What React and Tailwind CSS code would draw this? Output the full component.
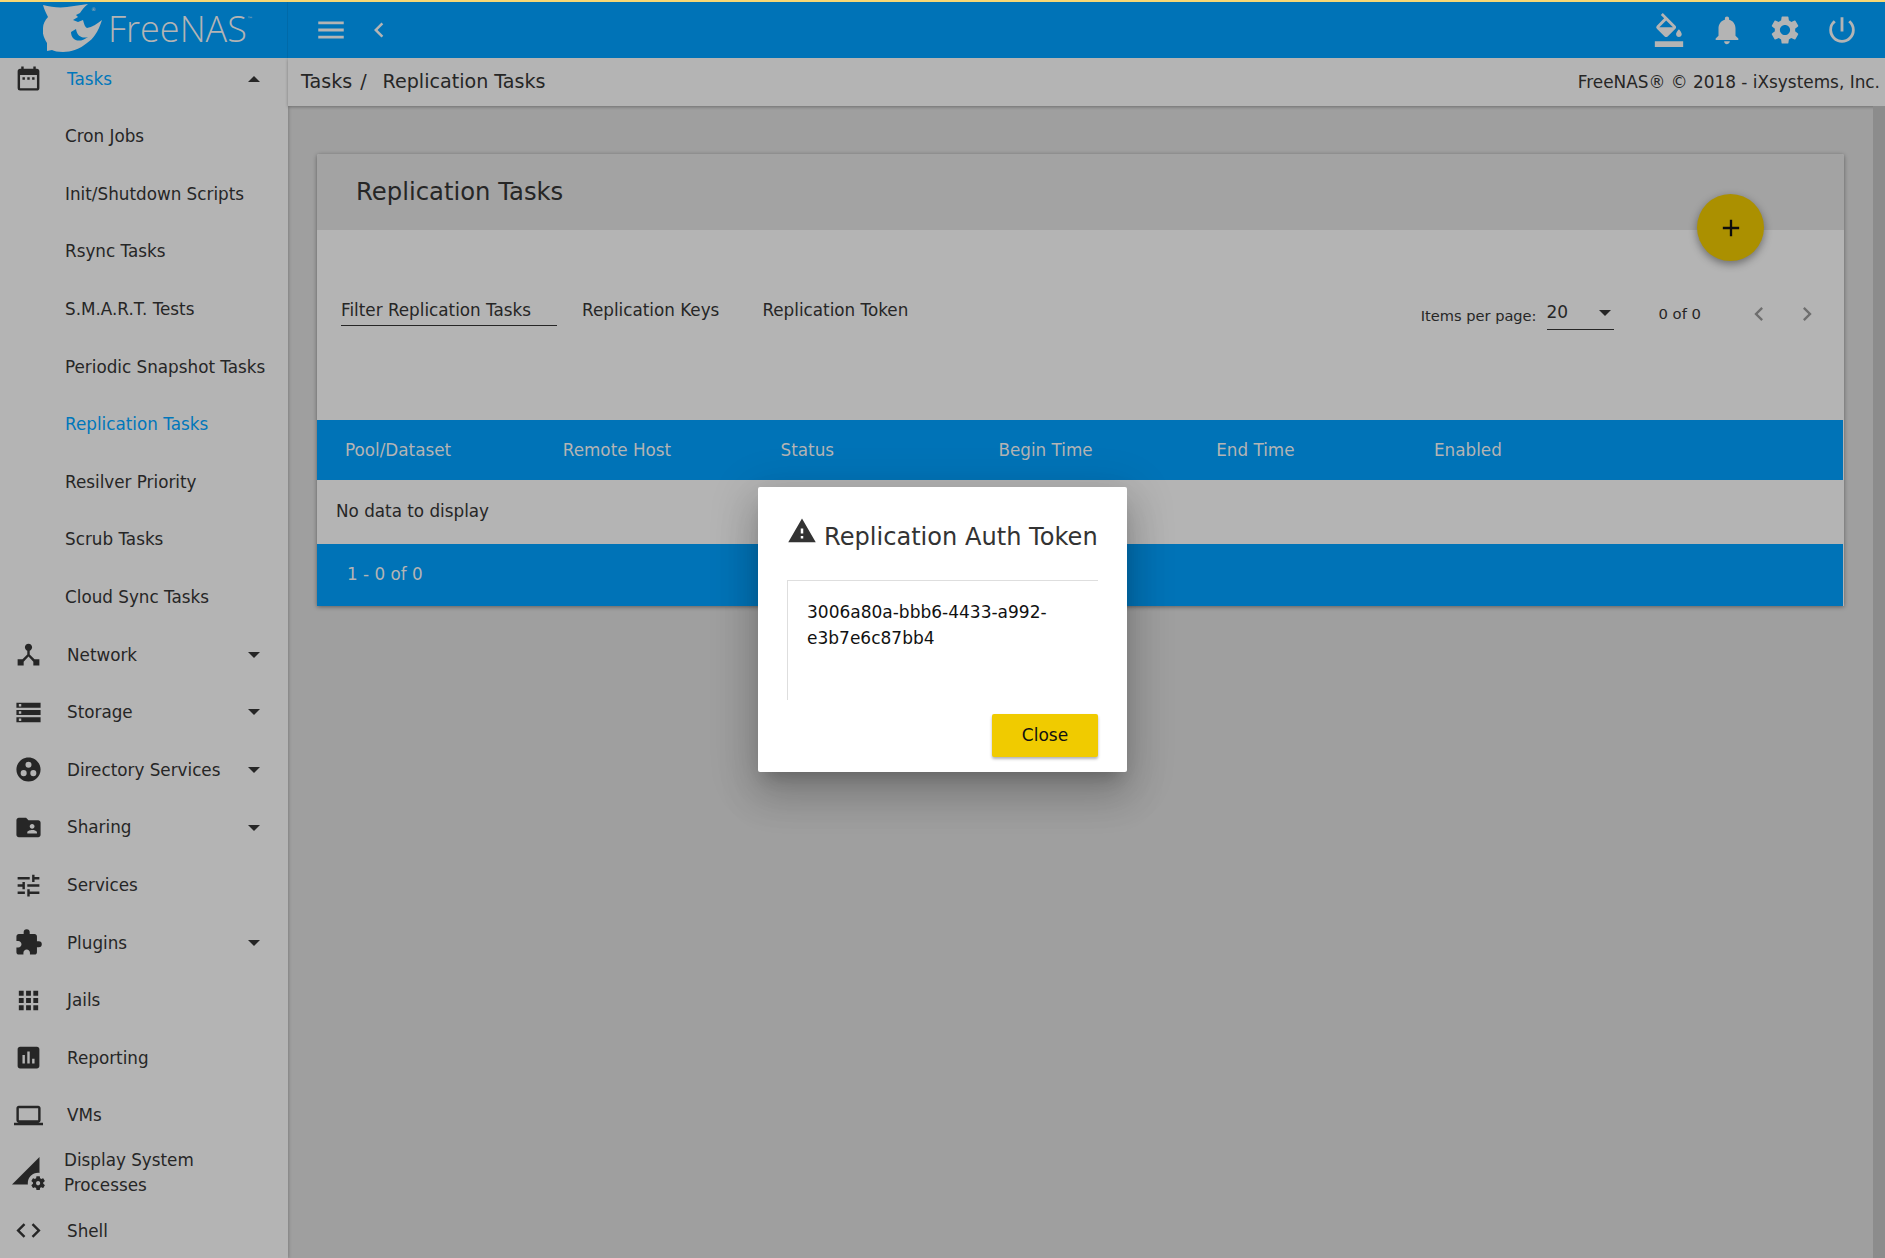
import {
  MdApps, MdAssessment, MdChevronLeft, MdChevronRight, MdCode, MdDateRange, MdDeviceHub, MdExtension,
  MdFolderShared, MdFormatColorFill, MdGroupWork, MdLaptop, MdMenu, MdNotifications, MdPermDataSetting,
  MdPowerSettingsNew, MdSettings, MdStorage, MdTune, MdWarning, MdAdd,
} from 'react-icons/md';

const fontStack = 'font-["DejaVu_Sans",sans-serif]';

const taskLinks = [
  'Cron Jobs',
  'Init/Shutdown Scripts',
  'Rsync Tasks',
  'S.M.A.R.T. Tests',
  'Periodic Snapshot Tasks',
  'Replication Tasks',
  'Resilver Priority',
  'Scrub Tasks',
  'Cloud Sync Tasks',
];

const navLinks = [
  { label: 'Network', icon: MdDeviceHub, caret: true },
  { label: 'Storage', icon: MdStorage, caret: true },
  { label: 'Directory Services', icon: MdGroupWork, caret: true },
  { label: 'Sharing', icon: MdFolderShared, caret: true },
  { label: 'Services', icon: MdTune },
  { label: 'Plugins', icon: MdExtension, caret: true },
  { label: 'Jails', icon: MdApps },
  { label: 'Reporting', icon: MdAssessment },
  { label: 'VMs', icon: MdLaptop },
];

const columns = ['Pool/Dataset', 'Remote Host', 'Status', 'Begin Time', 'End Time', 'Enabled'];

function Caret({ up = false, className = '' }) {
  return (
    <svg width="12" height="6" viewBox="0 0 12 6" className={`fill-[#262626] ${className}`}>
      <path d={up ? 'M0 6L6 0l6 6z' : 'M0 0l6 6 6-6z'} />
    </svg>
  );
}

function Logo() {
  return (
    <div className="flex items-center pl-[43px] text-[#b4b4b4]">
      <svg width="62" height="52" viewBox="0 0 62 52" className="-mt-[3px] shrink-0 fill-[#b4b4b4]">
        <path d="M0 2 C8 4 16 5 24 4 C31 3 38 2 45 1 C41 4 39 7 37 10 L33 12 L35 14 L30 17 L35 19 L40 17 C41 21 42 24 44 25 C49 24 54 21 59 17 C57 23 55 28 52 32 C50 35 47 38 44 40 C37 46 28 49 20 49 C15 49 11 48 9 47 L4 48 L4 40 C1 35 -1 30 0 25 C0 21 2 17 5 14 C3 10 1 6 0 2 Z" />
        <path d="M28 29 C28 37 36 41 45 34 C39 36 34 33 33 26 Z" className="fill-[#0073b7]" />
        <text x="48" y="8" fontSize="5" className="fill-[#b4b4b4]">®</text>
      </svg>
      <span className='-mt-[3px] ml-[3px] font-["Open_Sans",sans-serif] text-[36px] leading-none font-light'>FreeNAS</span>
      <span className="mb-[24px] text-[6px]">™</span>
    </div>
  );
}

function NavRow({ label, icon: Icon, caret, active }) {
  return (
    <div className="flex h-[57.6px] shrink-0 items-center pr-[28px]">
      <div className="flex w-[67px] shrink-0 justify-center pr-[11px]">
        <Icon size={29} className="text-[#262626]" />
      </div>
      <span className={`flex-1 pt-[1px] text-[16.8px] ${active ? 'text-[#0077bb]' : 'text-[#262626]'}`}>{label}</span>
      {caret && <Caret up={active} />}
    </div>
  );
}

function Sidebar() {
  return (
    <aside className="w-[288px] shrink-0 overflow-hidden bg-[#b4b4b4] shadow-[1px_0_3px_rgba(0,0,0,0.2)]">
      <div className="-mt-[8px] flex flex-col">
        <NavRow label="Tasks" icon={MdDateRange} caret active />
        {taskLinks.map((link) => (
          <div
            key={link}
            className={`flex h-[57.6px] shrink-0 items-center pl-[65px] pt-[1px] text-[16.8px] ${link === 'Replication Tasks' ? 'text-[#0077bb]' : 'text-[#262626]'}`}
          >
            {link}
          </div>
        ))}
        {navLinks.map((link) => (
          <NavRow key={link.label} {...link} />
        ))}
        <div className="flex h-[57.6px] shrink-0 items-center">
          <div className="flex w-[64px] shrink-0 justify-center pr-[8px]">
            <MdPermDataSetting size={33} className="text-[#262626]" />
          </div>
          <span className="text-[16.8px] leading-[25px] text-[#262626]">
            Display System
            <br />
            Processes
          </span>
        </div>
        <NavRow label="Shell" icon={MdCode} />
      </div>
    </aside>
  );
}

function TopBar() {
  return (
    <header className="z-20 flex h-[58px] shrink-0 items-center border-t-2 border-[#f7d774] bg-[#0073b7] text-[#b4b4b4]">
      <div className="flex h-full w-[288px] shrink-0 items-center border-r border-[#006aa9]">
        <Logo />
      </div>
      <MdMenu size={34} className="ml-[26px]" />
      <MdChevronLeft size={30} className="ml-[16px]" />
      <div className="ml-auto flex items-center gap-[24px] pr-[26px]">
        <MdFormatColorFill size={34} />
        <MdNotifications size={34} />
        <MdSettings size={34} />
        <MdPowerSettingsNew size={34} className="-ml-[1px]" />
      </div>
    </header>
  );
}

function Toolbar() {
  return (
    <div className="flex h-[190px] pl-[24px] pr-[23px]">
      <div className="mt-[58px] flex h-[38px] items-start text-[16.8px] text-[#262626]">
        <div className="h-[38px] w-[216px] border-b border-[#262626] pt-[10px] leading-[24px]">Filter Replication Tasks</div>
        <div className="ml-[25px] pt-[10px] leading-[24px]">Replication Keys</div>
        <div className="ml-[43px] pt-[10px] leading-[24px]">Replication Token</div>
      </div>
      <div className="ml-auto mt-[64px] flex h-[36px] items-start text-[#262626]">
        <span className="mt-[12px] text-[14.6px] leading-[20px]">Items per page:</span>
        <div className="ml-[10px] flex h-[36px] w-[67px] items-center justify-between border-b border-[#262626] pr-[3px] pt-[2px] text-[17px]">
          20
          <Caret />
        </div>
        <span className="ml-[45px] mt-[10px] text-[14.8px] leading-[20px]">0 of 0</span>
        <MdChevronLeft size={28} className="ml-[44px] mt-[6px] text-[#6e6e6e]" />
        <MdChevronRight size={28} className="ml-[20px] mt-[6px] text-[#6e6e6e]" />
      </div>
    </div>
  );
}

function ReplicationCard() {
  return (
    <section className="relative w-[1527px] rounded-t-[2px] bg-[#b4b4b4] shadow-[0_1px_4px_rgba(0,0,0,0.4)]">
      <div className="flex h-[76px] items-center rounded-t-[2px] bg-[#a3a3a3] pl-[39px] pt-[1px] text-[24.3px] text-[#262626]">
        Replication Tasks
      </div>
      <button className="absolute right-[80px] top-[40px] flex h-[67px] w-[67px] items-center justify-center rounded-full bg-[#ab9000] text-[#0d0d0d] shadow-[0_3px_8px_rgba(0,0,0,0.4)]">
        <MdAdd size={28} />
      </button>
      <Toolbar />
      <div className="mr-[1px] flex h-[60px] items-center bg-[#0073b7] pl-[28px] pt-[1px] text-[16.8px] text-[#b4b4b4]">
        {columns.map((col) => (
          <div key={col} className="w-[217.8px] shrink-0">
            {col}
          </div>
        ))}
      </div>
      <div className="flex h-[64px] items-center pl-[19px] text-[16.8px] text-[#262626]">No data to display</div>
      <div className="mr-[1px] flex h-[62px] items-center bg-[#0073b7] pl-[30px] text-[16.8px] text-[#b4b4b4]">1 - 0 of 0</div>
    </section>
  );
}

function TokenDialog() {
  return (
    <div className="absolute left-[758px] top-[487px] z-30 h-[285px] w-[369px] rounded-[2px] bg-white px-[29px] pt-[30px] shadow-[0_11px_15px_-7px_rgba(0,0,0,0.2),0_24px_38px_3px_rgba(0,0,0,0.14),0_9px_46px_8px_rgba(0,0,0,0.12)]">
      <div className="flex h-[39px] items-center">
        <MdWarning size={30} className="-mt-[11px] shrink-0 text-[#333333]" />
        <span className="ml-[7px] whitespace-nowrap pt-[1px] text-[24.1px] text-[#333333]">Replication Auth Token</span>
      </div>
      <div className="mt-[24px] h-[120px] w-[311px] border-l border-t border-[#dedede] pl-[19px] pt-[19px] text-[17px] leading-[25.5px] text-[#111111]">
        3006a80a-bbb6-4433-a992-
        <br />
        e3b7e6c87bb4
      </div>
      <div className="mt-[14px] flex w-[311px] justify-end">
        <button className="h-[43px] w-[106px] rounded-[2px] bg-[#f0cb00] text-[17px] text-[#111111] shadow-[0_2px_3px_rgba(0,0,0,0.3)]">
          Close
        </button>
      </div>
    </div>
  );
}

export default function App() {
  return (
    <div className={`relative flex h-[1258px] w-[1885px] flex-col overflow-hidden bg-[#9f9f9f] ${fontStack}`}>
      <TopBar />
      <div className="flex min-h-0 flex-1">
        <Sidebar />
        <main className="flex min-w-0 flex-1 flex-col">
          <div className="flex h-[48px] shrink-0 items-center justify-between bg-[#b4b4b4] pl-[13px] pr-[5px] text-[#262626] shadow-[0_1px_3px_rgba(0,0,0,0.3)]">
            <div className="flex items-center text-[19.1px]">
              <span>Tasks</span>
              <span className="ml-[8px]">/</span>
              <span className="ml-[16px]">Replication Tasks</span>
            </div>
            <span className="pt-[1px] text-[16.9px]">FreeNAS® © 2018 - iXsystems, Inc.</span>
          </div>
          <div className="flex min-h-0 flex-1">
            <div className="flex-1 pl-[29px] pt-[48px]">
              <ReplicationCard />
            </div>
            <div className="w-[12px] shrink-0 bg-[#8c8c8c]" />
          </div>
        </main>
      </div>
      <TokenDialog />
    </div>
  );
}
